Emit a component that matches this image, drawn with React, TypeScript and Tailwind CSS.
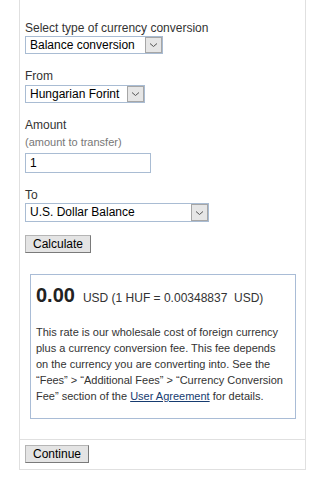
import React from 'react';

const Chevron: React.FC = () => (
  <svg width="9" height="6" viewBox="0 0 9 6" fill="none">
    <path d="M1 1.5 L4.5 4.5 L8 1.5" stroke="#555" strokeWidth="1" />
  </svg>
);

const FakeSelect: React.FC<{ label: string; width: string; height?: string }> = ({ label, width, height = 'h-[18px]' }) => (
  <div className={`flex items-stretch border border-[#a9bcd3] bg-white ${width} ${height}`}>
    <span className="flex-1 pl-[4px] leading-[16px] text-[12px] text-black whitespace-nowrap overflow-hidden">{label}</span>
    <span className="w-[17px] flex items-center justify-center bg-[#e6e6e6] border border-[#a6a6a6]">
      <Chevron />
    </span>
  </div>
);

const Button: React.FC<{ children: React.ReactNode }> = ({ children }) => (
  <button className="h-[18px] px-[7px] text-[12px] leading-[14px] text-black bg-[#e4e4e4] border border-[#b5b5b5] border-r-[#7a7a7a] border-b-[#7a7a7a]">
    {children}
  </button>
);

export default function App() {
  return (
    <div className="w-[323px] h-[489px] bg-white font-['Liberation_Sans',Arial,sans-serif] text-[12px] text-[#333]">
      <div className="ml-[19px] w-[287px] border-x border-b border-[#e0e0e0]">
        {/* Form */}
        <div className="pl-[5px] pt-[21px] pb-[20px]">
          <div className="leading-[14px] mb-[1px]">Select type of currency conversion</div>
          <FakeSelect label="Balance conversion" width="w-[138px]" />

          <div className="leading-[14px] mt-[15px] mb-[2px]">From</div>
          <FakeSelect label="Hungarian Forint" width="w-[120px]" />

          <div className="leading-[14px] mt-[15px]">Amount</div>
          <div className="text-[11px] leading-[13px] text-[#777] mt-[4px] mb-[4px]">(amount to transfer)</div>
          <div className="w-[126px] h-[20px] border border-[#a9bcd3] pl-[4px] leading-[18px] text-[12px] text-black">1</div>

          <div className="leading-[14px] mt-[15px] mb-[1px]">To</div>
          <FakeSelect label="U.S. Dollar Balance" width="w-[184px]" height="h-[19px]" />

          <div className="mt-[13px]">
            <Button>Calculate</Button>
          </div>

          {/* Result box */}
          <div className="mt-[21px] ml-[5px] w-[266px] h-[145px] border border-[#a9bcd6] pl-[5px] pr-[5px] pt-[8px]">
            <div className="leading-[24px] whitespace-nowrap">
              <span className="text-[20px] font-bold text-[#222]">0.00</span>
              <span className="ml-[8px] text-[12px]">USD (1 HUF = 0.00348837&nbsp; USD)</span>
            </div>
            <p className="mt-[14px] text-[11px] leading-[16px]">
              This rate is our wholesale cost of foreign currency plus a currency conversion fee. This fee depends
              on the currency you are converting into. See the “Fees” &gt; “Additional Fees” &gt; “Currency Conversion
              Fee” section of the <a href="#" className="text-[#163b70] underline">User Agreement</a> for details.
            </p>
          </div>
        </div>

        {/* Footer */}
        <div className="border-t border-[#e0e0e0] pl-[5px] pt-[5px] pb-[6px]">
          <Button>Continue</Button>
        </div>
      </div>
    </div>
  );
}
